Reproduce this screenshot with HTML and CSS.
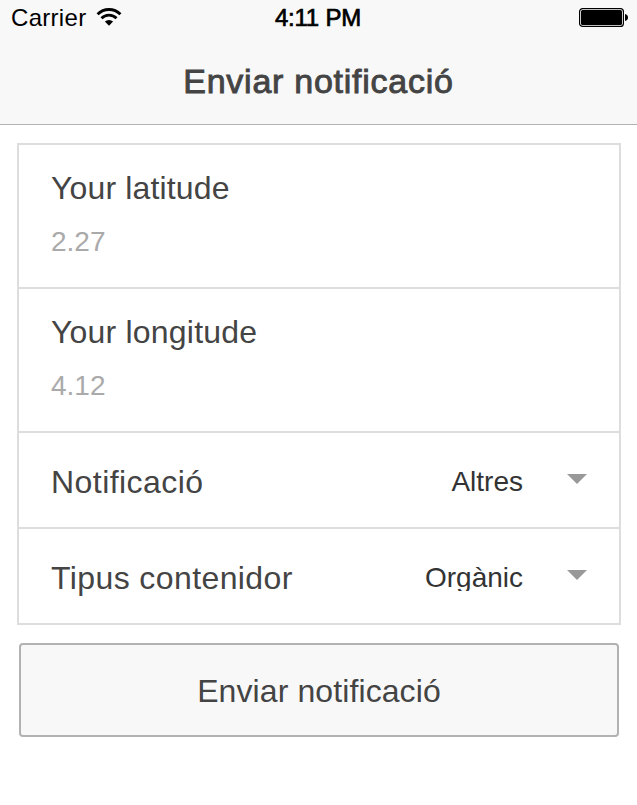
FILE: index.html
```html
<!DOCTYPE html>
<html lang="ca">
<head>
<meta charset="utf-8">
<title>Enviar notificació</title>
<link rel="stylesheet" href="styles.css">
</head>
<body>
<header class="header">
  <div class="status">
    <div class="status-left">
      <span class="carrier">Carrier</span>
      <svg class="wifi" width="26" height="18" viewBox="0 0 26 18">
        <path d="M1.6 6.2a16.2 16.2 0 0 1 22.8 0" fill="none" stroke="#000" stroke-width="3"/>
        <path d="M5.5 10.2a10.6 10.6 0 0 1 15 0" fill="none" stroke="#000" stroke-width="2.9"/>
        <path d="M13 17.7 8.9 13.6a5.8 5.8 0 0 1 8.2 0z"/>
      </svg>
    </div>
    <span class="time">4:11 PM</span>
    <div class="status-right">
      <svg width="50" height="20" viewBox="0 0 50 20">
        <rect x=".6" y=".6" width="43.8" height="17.8" rx="3" fill="#fff" stroke="#000" stroke-width="1.2"/>
        <rect x="2" y="2" width="41" height="15" rx="1.5"/>
        <path d="M46 6c2 .4 3 1.700 3 3.500s-1 3.100-3 3.500z"/>
      </svg>
    </div>
  </div>
  <h1 class="title">Enviar notificació</h1>
</header>
<main class="content">
  <div class="list">
    <div class="item">
      <div class="label latitude">Your latitude</div>
      <div class="value">2.27</div>
    </div>
    <div class="item">
      <div class="label longitude">Your longitude</div>
      <div class="value">4.12</div>
    </div>
    <div class="item select">
      <span class="label kind">Notificació</span>
      <span class="option">Altres</span>
      <span class="arrow"></span>
    </div>
    <div class="item select">
      <span class="label container-type">Tipus contenidor</span>
      <span class="option clipped">Orgànic</span>
      <span class="arrow"></span>
    </div>
  </div>
  <button class="button" type="button">Enviar notificació</button>
</main>
</body>
</html>
```
FILE: styles.css
```css
* { box-sizing: border-box; }
body {
  margin: 0;
  background: #fff;
  color: #444;
  font-family: "Liberation Sans", Arial, sans-serif;
}
.header {
  height: 125px;
  background: #f8f8f8;
  border-bottom: 1px solid #b2b2b2;
}
.status {
  display: grid;
  grid-template-columns: 1fr auto 1fr;
  height: 40px;
  padding: 4px 8px 0 10px;
  color: #000;
  font-size: 24px;
  line-height: 28px;
}
.status-left { display: flex; }
.carrier { width: 86px; padding-left: 1px; letter-spacing: .3px; }
.wifi { margin-top: 4px; }
.time { margin: 0 2px 0 -1px; letter-spacing: -.2px; -webkit-text-stroke: .7px #000; }
.status-right { display: flex; justify-content: flex-end; padding-top: 4px; }
.title {
  margin: 0;
  padding-top: 21px;
  text-align: center;
  font-size: 34px;
  font-weight: 400;
  line-height: 40px;
  letter-spacing: .75px;
  -webkit-text-stroke: .9px #444;
}
.content { padding: 18px 16px 0 17px; }
.list { border: 2px solid #ddd; }
.item { height: 144px; padding: 23px 32px 0; border-bottom: 2px solid #ddd; }
.label { font-size: 32px; line-height: 40px; white-space: nowrap; }
.latitude { letter-spacing: .15px; }
.longitude { letter-spacing: .2px; }
.kind { letter-spacing: .45px; }
.container-type { letter-spacing: .4px; }
.value { margin-top: 18px; color: #aaa; font-size: 28px; line-height: 32px; }
.select { display: flex; height: 96px; padding-top: 29px; }
.item:last-child { height: 94px; border-bottom: 0; }
.option {
  height: 40px;
  margin: 0 44px 0 auto;
  color: #333;
  font-size: 28px;
  line-height: 40px;
}
.clipped { height: 33px; overflow: hidden; }
.arrow {
  width: 20px;
  height: 10px;
  margin-top: 12px;
  background: #999;
  clip-path: polygon(0 0, 100% 0, 50% 100%);
}
.button {
  display: block;
  width: 600px;
  height: 94px;
  margin: 18px 2px 0;
  padding: 2px 0 0;
  border: 2px solid #b2b2b2;
  border-radius: 4px;
  background: #f8f8f8;
  color: #444;
  font: 32px/40px "Liberation Sans", Arial, sans-serif;
  letter-spacing: .1px;
}
```
